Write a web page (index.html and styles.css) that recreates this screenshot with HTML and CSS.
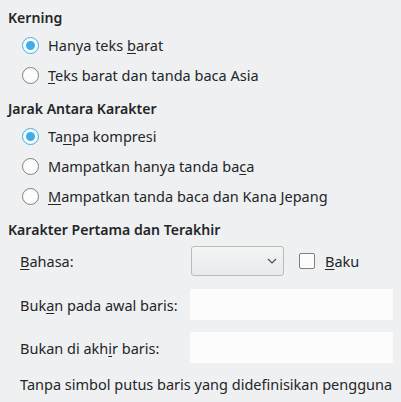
FILE: index.html
```html
<!DOCTYPE html>
<html>
<head>
<meta charset="utf-8">
<link rel="stylesheet" href="styles.css">
</head>
<body>
<div class="page">
  <div class="title">Kerning</div>
  <div class="radios first">
    <div class="radio-row"><span class="radio checked"></span><span>Hanya teks <u>b</u>arat</span></div>
    <div class="radio-row"><span class="radio"></span><span><u>T</u>eks barat dan tanda baca Asia</span></div>
  </div>
  <div class="title gap">Jarak Antara Karakter</div>
  <div class="radios">
    <div class="radio-row"><span class="radio checked"></span><span>Ta<u>n</u>pa kompresi</span></div>
    <div class="radio-row"><span class="radio"></span><span>Mampatkan hanya tanda ba<u>c</u>a</span></div>
    <div class="radio-row"><span class="radio"></span><span><u>M</u>ampatkan tanda baca dan Kana Jepang</span></div>
  </div>
  <div class="title gap">Karakter Pertama dan Terakhir</div>
  <div class="form">
    <div class="form-row combo-row">
      <div class="label"><u>B</u>ahasa:</div>
      <div class="combo-wrap">
        <div class="combo">
          <svg class="chev" width="10" height="6" viewBox="0 0 10 6"><path d="M1 1 L5 5 L9 1" fill="none" stroke="#4d4d4d" stroke-width="1.1"/></svg>
        </div>
        <span class="checkbox"></span>
        <span class="cb-label"><u>B</u>aku</span>
      </div>
    </div>
    <div class="form-row field-row first-field">
      <div class="label">Buk<u>a</u>n pada awal baris:</div>
      <div class="field"></div>
    </div>
    <div class="form-row field-row">
      <div class="label">Bukan di akh<u>i</u>r baris:</div>
      <div class="field"></div>
    </div>
    <div class="note">Tanpa simbol putus baris yang didefinisikan pengguna</div>
  </div>
</div>
</body>
</html>
```
FILE: styles.css
```css
html, body {
  margin: 0;
  padding: 0;
  background: #eff0f1;
}
body {
  font-family: "Noto Sans", "Open Sans", sans-serif;
  font-size: 14.5px;
  color: #232629;
  width: 401px;
  height: 402px;
  overflow: hidden;
}
.page {
  padding: 8px 0 0 8px;
}
u {
  text-decoration: underline;
  text-underline-offset: 2px;
  text-decoration-thickness: 1px;
}
.title {
  font-weight: 600;
  font-size: 14.1px;
  line-height: 20px;
  height: 20px;
}
.title.gap {
  margin-top: 9px;
}
.radios {
  margin-top: 2px;
  padding-left: 14px;
}
.radio-row {
  display: flex;
  align-items: center;
  height: 30px;
  gap: 9px;
}
.radio {
  width: 15px;
  height: 15px;
  border-radius: 50%;
  border: 1px solid #7d7f81;
  background: #fcfcfc;
  box-sizing: content-box;
  flex: none;
  position: relative;
}
.radio.checked {
  border-color: #3daee9;
  background: #fcfcfc;
}
.radio.checked::after {
  content: "";
  position: absolute;
  left: 3px;
  top: 3px;
  width: 9px;
  height: 9px;
  border-radius: 50%;
  background: #3daee9;
}
.form {
  padding-left: 12px;
}
.form-row {
  display: flex;
  align-items: center;
}
.label {
  width: 170px;
  flex: none;
}
.combo-row {
  margin-top: 6px;
  height: 30px;
}
.combo-wrap {
  display: flex;
  align-items: center;
}
.combo {
  margin-left: 1px;
  width: 85px;
  height: 28px;
  border: 1px solid #b9bbbd;
  border-radius: 3px;
  background: linear-gradient(#f3f4f4, #e9eaeb);
  display: flex;
  align-items: center;
  justify-content: flex-end;
  padding-right: 6px;
  box-sizing: content-box;
}
.combo .chev {
  display: block;
}
.checkbox {
  margin-left: 15px;
  width: 14px;
  height: 14px;
  border: 1px solid #7d7f81;
  border-radius: 2px;
  background: #fcfcfc;
  box-sizing: content-box;
}
.cb-label {
  margin-left: 10px;
}
.field-row {
  height: 31px;
  margin-top: 12px;
}
.first-field {
  margin-top: 13px;
}
.field {
  width: 203px;
  height: 31px;
  background: #fcfcfc;
}
.note {
  margin-top: 11px;
  line-height: 20px;
}
```
